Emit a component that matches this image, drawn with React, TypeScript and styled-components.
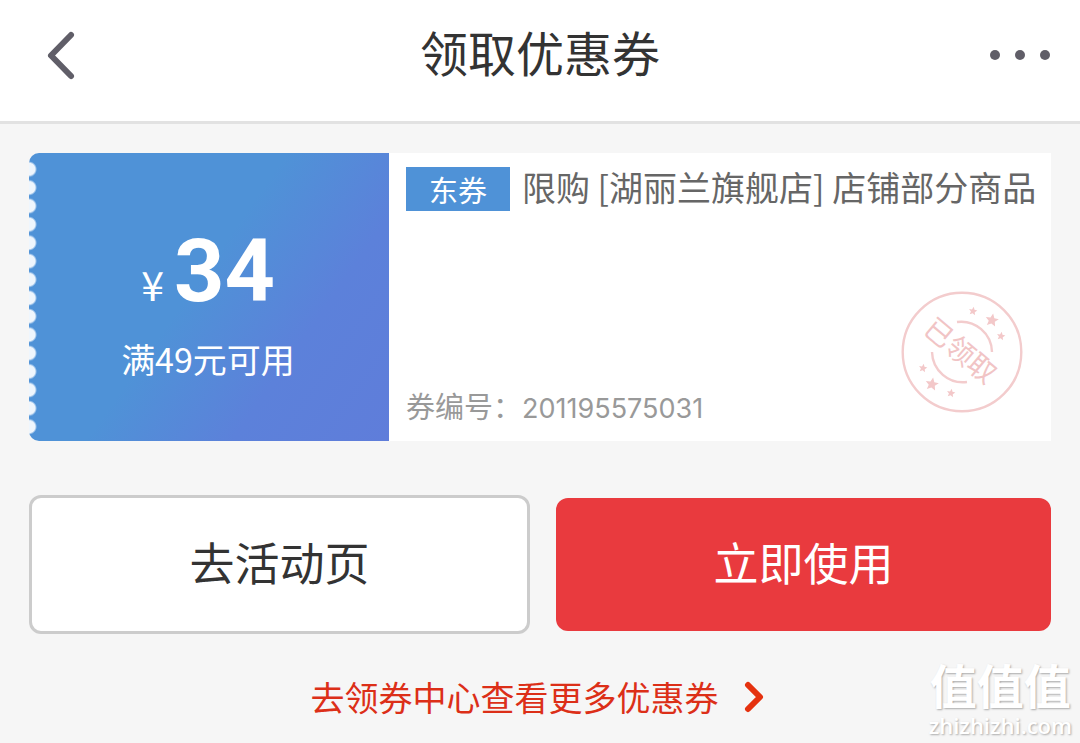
import React from "react";
import styled, { createGlobalStyle } from "styled-components";

const GlobalStyle = createGlobalStyle`
  * { box-sizing: border-box; }
  body {
    margin: 0;
    background: #f6f6f6;
    color: #333;
    font-family: "Noto Sans CJK SC", sans-serif;
  }
  button { font-family: inherit; cursor: pointer; }
`;

const Page = styled.div`
  position: relative;
  min-height: 100vh;
  overflow: hidden;
`;

const Header = styled.header`
  display: grid;
  grid-template-columns: 64px 1fr 64px;
  align-items: center;
  height: 124px;
  padding: 0 28px 12px;
  background: #fff;
  border-bottom: 3px solid #e2e2e2;
`;

const Title = styled.h1`
  margin: 0;
  padding-bottom: 8px;
  font-size: 48px;
  line-height: 72px;
  font-weight: 400;
  text-align: center;
`;

const IconButton = styled.button`
  display: flex;
  align-items: center;
  justify-content: center;
  width: 64px;
  height: 64px;
  padding: 0;
  border: 0;
  background: none;
  color: #605e68;
`;

const Content = styled.main`
  padding: 29px 29px 16px;
`;

const Ticket = styled.section`
  display: grid;
  grid-template-columns: 360px 1fr;
  min-height: 288px;
  background: linear-gradient(to right, #f6f6f6 40px, #fff 40px);
`;

const ValuePanel = styled.div`
  display: flex;
  border-radius: 10px 0 0 10px;
  background: linear-gradient(125deg, #4f92d7 46%, #5c81da 72%, #5f7dda);
  color: #fff;
`;

const Perforation = styled.div`
  flex: 0 0 8px;
  margin: 7px 0 5px;
  background: radial-gradient(circle at 0 50%, #eff6fd 6px, transparent 8px) 0 0 / 8px 18px round;
`;

const Value = styled.div`
  flex: 1;
  display: flex;
  flex-direction: column;
  align-items: center;
  justify-content: center;
  padding-right: 10px;
`;

const Amount = styled.div`
  display: flex;
  align-items: baseline;
  gap: 10px;
  padding-top: 8px;
  line-height: 104px;
`;

const Currency = styled.span`
  font-size: 41px;
`;

const Figure = styled.strong`
  font-family: Roboto, sans-serif;
  font-size: 88px;
  font-weight: 700;
`;

const Condition = styled.div`
  font-size: 34px;
  line-height: 48px;
`;

const Details = styled.div`
  position: relative;
  display: flex;
  flex-direction: column;
  justify-content: space-between;
  padding: 10px 12px 10px 17px;
`;

const Heading = styled.div`
  display: flex;
  align-items: center;
  gap: 12px;
`;

const Badge = styled.span`
  flex: 0 0 104px;
  margin-top: 4px;
  background: #4f92d7;
  color: #fff;
  font-size: 29px;
  line-height: 44px;
  text-align: center;
`;

const Scope = styled.h2`
  margin: 0;
  font-size: 34px;
  line-height: 48px;
  font-weight: 400;
  color: #666;
  white-space: nowrap;
`;

const Serial = styled.div`
  font-size: 29px;
  line-height: 44px;
  color: #999;
`;

const SerialNumber = styled.span`
  font-family: Inter, sans-serif;
  font-size: 27px;
`;

const Stamp = styled.svg`
  position: absolute;
  right: 28px;
  bottom: 28px;
  width: 122px;
  height: 122px;
`;

const Actions = styled.div`
  display: flex;
  align-items: center;
  gap: 26px;
  margin-top: 54px;
`;

const ActionButton = styled.button<{ $primary?: boolean }>`
  box-sizing: content-box;
  flex: 1 1 0;
  padding: 30px 0 35px;
  border: ${(p) => (p.$primary ? "0" : "3px solid #ccc")};
  border-radius: 12px;
  background: ${(p) => (p.$primary ? "#e93a3e" : "#fff")};
  color: ${(p) => (p.$primary ? "#fff" : "#333")};
  font-size: 45px;
  line-height: 68px;
`;

const MoreLink = styled.a`
  display: flex;
  align-items: center;
  justify-content: center;
  gap: 25px;
  margin-top: 37px;
  padding-right: 6px;
  color: #dc2f18;
  font-size: 34px;
  line-height: 52px;
  text-decoration: none;
`;

const Watermark = styled.div`
  position: absolute;
  right: 8px;
  bottom: 4px;
  color: #fff;
  text-align: center;
  text-shadow: 1px 1px 2px #aaa;
`;

const WatermarkName = styled.div`
  font-size: 47px;
  line-height: 54px;
  font-weight: 700;
`;

const WatermarkSite = styled.div`
  font-family: "Open Sans", sans-serif;
  font-size: 22px;
  line-height: 28px;
  font-weight: 600;
`;

const STAR = "M0 -6 L1.8 -2 L6 -1.7 L2.8 1.2 L3.8 5.4 L0 3.2 L-3.8 5.4 L-2.8 1.2 L-6 -1.7 L-1.8 -2 Z";

const stars = [
  { x: 11, y: -41, s: 0.7 },
  { x: 30, y: -32, s: 1.1 },
  { x: 39, y: -16, s: 0.7 },
];

function ReceivedStamp() {
  return (
    <Stamp viewBox="-61 -61 122 122" role="img" aria-label="已领取">
      <g fill="none" stroke="#f3cccd" strokeWidth="2.4">
        <circle r="59.3" />
        <path d="M-5 -30 A31 31 0 0 1 30 0" />
        <path d="M5 30 A31 31 0 0 1 -30 0" />
      </g>
      <g fill="#f3c8c9">
        {stars.map((p) => (
          <path key={p.x} d={STAR} transform={`translate(${p.x} ${p.y}) rotate(10) scale(${p.s})`} />
        ))}
        {stars.map((p) => (
          <path key={-p.x} d={STAR} transform={`translate(${-p.x} ${-p.y}) rotate(10) scale(${p.s})`} />
        ))}
        <text transform="rotate(40)" x="-2" y="10" textAnchor="middle" fontSize="28" fill="#f1c4c5">
          已领取
        </text>
      </g>
    </Stamp>
  );
}

export default function App() {
  return (
    <Page>
      <GlobalStyle />
      <Header>
        <IconButton aria-label="返回">
          <svg width="36" height="52" viewBox="0 0 36 52" fill="none" stroke="currentColor" strokeWidth="6" strokeLinecap="round" strokeLinejoin="round">
            <path d="M29 6 L9 26.5 L29 47" />
          </svg>
        </IconButton>
        <Title>领取优惠券</Title>
        <IconButton aria-label="更多">
          <svg width="64" height="12" viewBox="0 0 64 12" fill="currentColor">
            <circle cx="7" cy="6" r="5" />
            <circle cx="32" cy="6" r="5" />
            <circle cx="57" cy="6" r="5" />
          </svg>
        </IconButton>
      </Header>
      <Content>
        <Ticket>
          <ValuePanel>
            <Perforation />
            <Value>
              <Amount>
                <Currency>¥</Currency>
                <Figure>34</Figure>
              </Amount>
              <Condition>满49元可用</Condition>
            </Value>
          </ValuePanel>
          <Details>
            <Heading>
              <Badge>东券</Badge>
              <Scope>限购 [湖丽兰旗舰店] 店铺部分商品</Scope>
            </Heading>
            <Serial>
              券编号：<SerialNumber>201195575031</SerialNumber>
            </Serial>
            <ReceivedStamp />
          </Details>
        </Ticket>
        <Actions>
          <ActionButton>去活动页</ActionButton>
          <ActionButton $primary>立即使用</ActionButton>
        </Actions>
        <MoreLink href="#coupons">
          去领券中心查看更多优惠券
          <svg width="20" height="32" viewBox="0 0 20 32" fill="none" stroke="#e5320f" strokeWidth="6" strokeLinecap="round" strokeLinejoin="round">
            <path d="M4 4 L16 16 L4 28" />
          </svg>
        </MoreLink>
      </Content>
      <Watermark>
        <WatermarkName>值值值</WatermarkName>
        <WatermarkSite>zhizhizhi.com</WatermarkSite>
      </Watermark>
    </Page>
  );
}
